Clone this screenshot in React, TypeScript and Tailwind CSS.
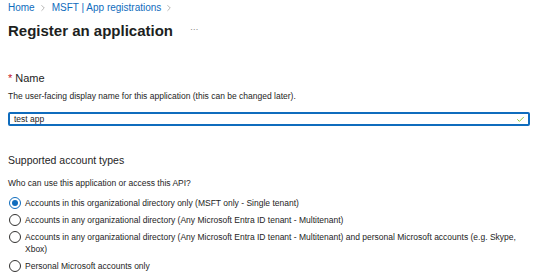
import React from 'react';
import { ChevronRight, Check } from 'lucide-react';

const options = [
  'Accounts in this organizational directory only (MSFT only - Single tenant)',
  'Accounts in any organizational directory (Any Microsoft Entra ID tenant - Multitenant)',
  'Accounts in any organizational directory (Any Microsoft Entra ID tenant - Multitenant) and personal Microsoft accounts (e.g. Skype, Xbox)',
  'Personal Microsoft accounts only',
];

function Radio({ checked }: { checked: boolean }) {
  return (
    <span
      className={`flex h-[12px] w-[12px] shrink-0 items-center justify-center rounded-full border ${
        checked ? 'border-[#0f6cbd]' : 'border-[#323130]'
      }`}
    >
      {checked && <span className="h-[6px] w-[6px] rounded-full bg-[#0f6cbd]" />}
    </span>
  );
}

export default function App() {
  return (
    <div className="h-[279px] w-[545px] overflow-hidden bg-white px-2 text-[#242424] font-['Liberation_Sans',Arial,sans-serif]">
      <nav className="flex h-4 items-center text-[10px] leading-4 text-[#0f6cbd]">
        <span>Home</span>
        <ChevronRight className="ml-[3px] mr-[4px] h-[10px] w-[10px] text-[#8a8886]" strokeWidth={1.5} />
        <span>MSFT | App registrations</span>
        <ChevronRight className="ml-[3px] h-[10px] w-[10px] text-[#8a8886]" strokeWidth={1.5} />
      </nav>

      <div className="flex h-7 items-center">
        <h1 className="pt-px text-[15px] font-semibold leading-7 text-[#201f1e]">Register an application</h1>
        <span className="ml-[17px] text-[9px] tracking-tight text-[#8a8886]">···</span>
      </div>

      <div className="mt-[26px] flex items-center gap-[3px] text-[11px] leading-4">
        <span className="text-[#c50f1f]">*</span>
        <span>Name</span>
      </div>
      <p className="mt-[3px] text-[8.5px] leading-[14px]">
        The user-facing display name for this application (this can be changed later).
      </p>

      <div className="mt-[9px] flex h-[14px] w-[522px] items-center justify-between rounded-[2px] border-2 border-[#0f6cbd] pl-[4px] pr-[3px] text-[8.5px]">
        <span>test app</span>
        <Check className="h-[9px] w-[9px] text-[#6bb700]" strokeWidth={2} />
      </div>

      <h2 className="mt-[26px] text-[10.5px] leading-4">Supported account types</h2>
      <p className="mt-2 text-[8.5px] leading-[14px]">Who can use this application or access this API?</p>

      <div className="mt-[7px] flex flex-col gap-[5px] pl-px">
        {options.map((label, i) => (
          <label key={label} className="flex items-start gap-[4px] text-[8.5px] leading-[12px]">
            <Radio checked={i === 0} />
            <span className="max-w-[492px]">{label}</span>
          </label>
        ))}
      </div>
    </div>
  );
}
